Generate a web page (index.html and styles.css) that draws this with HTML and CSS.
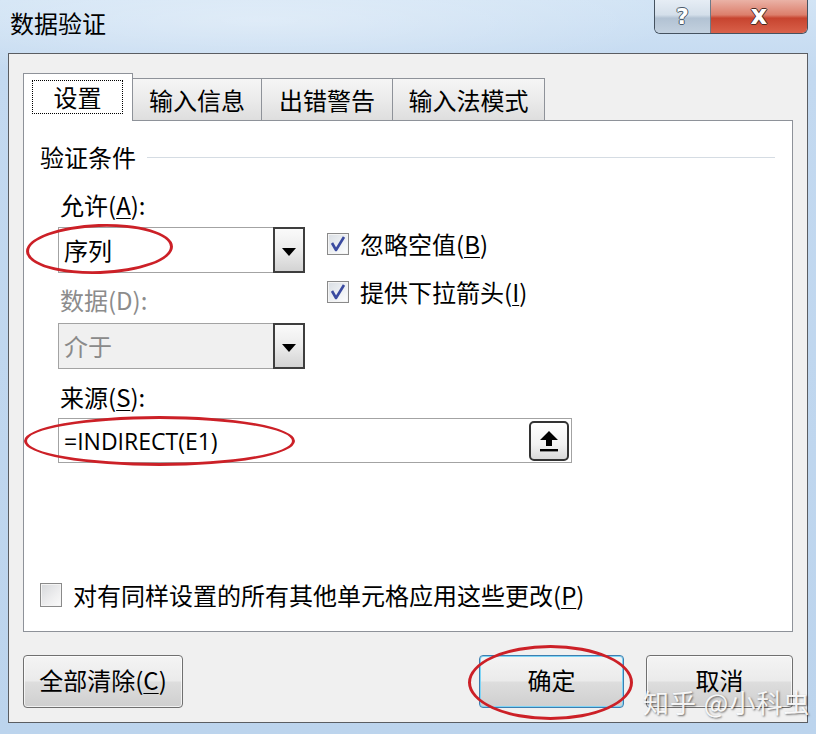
FILE: index.html
```html
<!DOCTYPE html>
<html>
	<head>
		<meta charset="UTF-8">
		<title>数据验证</title>
		<link rel="stylesheet" href="styles.css">
	</head>

	<body>
		<header class="titlebar">
			<h1 class="title">数据验证</h1>
			<div class="caption-btns">
				<span class="cap-help">?</span>
				<span class="cap-close">x</span>
			</div>
		</header>

		<div class="dialog">
			<nav class="tabs">
				<div class="tab active"><span class="focus">设置</span></div>
				<div class="tab w2">输入信息</div>
				<div class="tab w3">出错警告</div>
				<div class="tab w4">输入法模式</div>
			</nav>

			<section class="panel">
				<div class="group-head">
					<span>验证条件</span>
					<i class="rule"></i>
				</div>

				<div class="group">
					<div class="label first">允许(<u>A</u>):</div>
					<div class="allow-row">
						<div class="left">
							<div class="combo">
								<span class="combo-text">序列</span>
								<span class="drop"><i class="tri"></i></span>
							</div>
							<div class="label gray">数据(D):</div>
							<div class="combo disabled">
								<span class="combo-text">介于</span>
								<span class="drop"><i class="tri"></i></span>
							</div>
						</div>
						<div class="checks">
							<label class="check-row">
								<span class="box">
									<svg width="20" height="20" viewBox="0 0 20 20"><path d="M4 9 L8 16 L16 3" fill="none" stroke="#3a4aa0" stroke-width="2.6" stroke-linejoin="round"/></svg>
								</span>
								<span>忽略空值(<u>B</u>)</span>
							</label>
							<label class="check-row">
								<span class="box">
									<svg width="20" height="20" viewBox="0 0 20 20"><path d="M4 9 L8 16 L16 3" fill="none" stroke="#3a4aa0" stroke-width="2.6" stroke-linejoin="round"/></svg>
								</span>
								<span>提供下拉箭头(<u>I</u>)</span>
							</label>
						</div>
					</div>

					<div class="label src">来源(<u>S</u>):</div>
					<div class="source">
						<span class="formula">=INDIRECT(E1)</span>
						<span class="pick">
							<svg width="22" height="24" viewBox="0 0 22 24"><path d="M11 2 L20 11 L14 11 L14 17 L8 17 L8 11 L2 11 Z" fill="#000"/><rect x="2" y="20" width="18" height="2.4" fill="#000"/></svg>
						</span>
					</div>
				</div>

				<label class="check-row apply">
					<span class="box empty"></span>
					<span>对有同样设置的所有其他单元格应用这些更改(<u>P</u>)</span>
				</label>
			</section>

			<footer class="buttons">
				<button class="btn clear">全部清除(<u>C</u>)</button>
				<span class="spacer"></span>
				<button class="btn ok">确定</button>
				<button class="btn cancel">取消</button>
			</footer>
		</div>

		<!-- 红色圈注 -->
		<div class="mark m1"></div>
		<div class="mark m2"></div>
		<div class="mark m3"></div>

		<div class="watermark">知乎 @小科虫</div>
	</body>

</html>
```

FILE: styles.css
```css
/* Win7 风格的数据验证对话框 */
body {
	margin: 0;
	width: 816px;
	height: 734px;
	overflow: hidden;
	position: relative;
	font-family: "Noto Sans CJK SC", "Noto Sans", sans-serif;
	font-size: 24px;
	color: #000;
	background:
		radial-gradient(ellipse 420px 60px at 260px 20px, rgba(255, 255, 255, 0.35), rgba(255, 255, 255, 0)),
		linear-gradient(180deg, #d2e4f5 0%, #c3d9f0 10%, #bcd4ed 100%);
}

u {
	text-decoration-thickness: 1px;
	text-underline-offset: 3px;
}

.titlebar {
	height: 53px;
	display: flex;
	justify-content: space-between;
	align-items: flex-start;
}

.title {
	margin: 0;
	padding: 8px 0 0 10px;
	font-size: 24px;
	font-weight: normal;
	line-height: 30px;
}

.caption-btns {
	display: flex;
	margin-right: 8px;
	height: 33px;
	border: 1px solid #45525f;
	border-top: none;
	border-radius: 0 0 6px 6px;
	overflow: hidden;
}

.cap-help,
.cap-close {
	display: flex;
	justify-content: center;
	align-items: center;
	font-family: "DejaVu Sans", sans-serif;
	font-weight: bold;
	color: #fff;
}

.cap-help {
	width: 55px;
	font-size: 22px;
	border-right: 1px solid #6c7a88;
	background: linear-gradient(180deg, #e6edf5 0%, #d4dfea 45%, #b2c2d3 55%, #c3d1df 100%);
	text-shadow: -1px 0 #4b5a6a, 1px 0 #4b5a6a, 0 -1px #4b5a6a, 0 1px #4b5a6a;
}

.cap-close {
	width: 96px;
	font-size: 26px;
	background: linear-gradient(180deg, #eab2a6 0%, #dc7f6c 45%, #c7442f 55%, #d9614a 100%);
	text-shadow: -1px 0 #4a2a24, 1px 0 #4a2a24, 0 -1px #4a2a24, 0 1px #4a2a24;
	padding-bottom: 4px;
	box-sizing: border-box;
}

.dialog {
	margin: 0 8px;
	height: 670px;
	box-sizing: border-box;
	border: 1px solid #5a5d62;
	background-color: #f0f0f0;
	padding: 19px 14px 0;
}

.tabs {
	display: flex;
	align-items: flex-end;
	height: 47px;
}

.tab {
	height: 42px;
	box-sizing: border-box;
	border: 1px solid #8e9299;
	border-bottom: none;
	border-left: none;
	background: linear-gradient(180deg, #f5f5f5 0%, #ebebeb 50%, #dedede 100%);
	display: flex;
	justify-content: center;
	align-items: center;
	line-height: 30px;
}

.tab.active {
	width: 110px;
	height: 48px;
	margin-bottom: -1px;
	position: relative;
	z-index: 1;
	border-left: 1px solid #8e9299;
	background: #fff;
	padding: 6px 9px 7px 8px;
	align-items: stretch;
}

.focus {
	flex: 1;
	border: 1px dotted #000;
	display: flex;
	justify-content: center;
	align-items: center;
}

.w2 {
	width: 129px;
}

.w3 {
	width: 131px;
}

.w4 {
	width: 152px;
}

.panel {
	height: 512px;
	box-sizing: border-box;
	border: 1px solid #8e9299;
	background: #fff;
	padding: 21px 17px 21px 16px;
	display: flex;
	flex-direction: column;
}

.group-head {
	display: flex;
	align-items: center;
	line-height: 30px;
}

.rule {
	flex: 1;
	height: 1px;
	margin-left: 11px;
	background: #d5dce3;
}

.group {
	padding-left: 18px;
}

.label {
	line-height: 30px;
	padding-left: 2px;
	margin-top: 12px;
}

.label.first {
	margin-top: 18px;
}

.label.gray {
	color: #8c8c8c;
}

.label.src {
	margin-top: 13px;
}

.allow-row {
	display: flex;
	gap: 22px;
	margin-top: 7px;
}

.left {
	width: 247px;
}

.combo {
	height: 46px;
	box-sizing: border-box;
	border: 1px solid #a3a3a3;
	background: #fff;
	display: flex;
	align-items: center;
	justify-content: space-between;
}

.combo.disabled {
	margin-top: 8px;
	background: #f0f0f0;
	color: #8a8a8a;
}

.combo-text {
	padding-left: 5px;
	line-height: 30px;
}

.drop {
	width: 32px;
	height: 46px;
	margin: -1px -1px -1px 0;
	box-sizing: border-box;
	border: 2px solid #3e3e3e;
	background: linear-gradient(180deg, #fafafa 0%, #ececec 50%, #d3d3d3 100%);
	display: flex;
	justify-content: center;
	align-items: center;
}

.tri {
	width: 0;
	height: 0;
	border-left: 7px solid transparent;
	border-right: 7px solid transparent;
	border-top: 8px solid #000;
	margin-top: 3px;
}

.checks {
	display: flex;
	flex-direction: column;
	gap: 18px;
	padding-top: 2px;
}

.check-row {
	display: flex;
	align-items: center;
	gap: 11px;
	line-height: 30px;
}

.box {
	width: 22px;
	height: 22px;
	box-sizing: border-box;
	border: 1px solid #8a8a8a;
	background: linear-gradient(135deg, #d9dee4 0%, #f3f5f7 70%, #fff 100%);
	display: flex;
	justify-content: center;
	align-items: center;
	box-shadow: inset 0 0 0 1px #f4f4f4;
}

.box.empty {
	height: 24px;
	background: linear-gradient(135deg, #d6d8db 0%, #eeeeef 60%, #fafafa 100%);
}

.source {
	margin-top: 6px;
	width: 514px;
	height: 45px;
	box-sizing: border-box;
	border: 1px solid #a3a3a3;
	display: flex;
	align-items: center;
	justify-content: space-between;
	padding: 0 2px 0 5px;
}

.formula {
	font-family: "Open Sans", "Noto Sans", sans-serif;
	font-size: 23px;
	line-height: 30px;
}

.pick {
	width: 40px;
	height: 40px;
	box-sizing: border-box;
	border: 2px solid #333;
	border-radius: 5px;
	background: linear-gradient(180deg, #fff 0%, #f2f2f2 60%, #d9d9d9 100%);
	display: flex;
	justify-content: center;
	align-items: center;
}

.apply {
	margin-top: auto;
}

.buttons {
	display: flex;
	gap: 22px;
	margin-top: 23px;
}

.spacer {
	flex: 1;
}

.btn {
	height: 53px;
	border: 1px solid #707070;
	border-radius: 4px;
	background: linear-gradient(180deg, #f4f4f4 0%, #ebebeb 48%, #dddddd 52%, #cfcfcf 100%);
	font-family: "Noto Sans CJK SC", sans-serif;
	font-size: 24px;
	color: #000;
	padding: 0 0 4px;
	box-shadow: inset 0 0 0 1px rgba(255, 255, 255, 0.7);
}

.clear {
	width: 160px;
}

.ok {
	width: 145px;
	border-color: #3c7fb1;
	box-shadow: inset 0 0 0 1px #7fd4f5;
}

.cancel {
	width: 147px;
}

.mark {
	position: absolute;
	border: 3px solid #cc2027;
	border-radius: 50%;
	box-sizing: border-box;
}

.m1 {
	left: 26px;
	top: 224px;
	width: 147px;
	height: 50px;
	transform: rotate(-2deg);
}

.m2 {
	left: 24px;
	top: 416px;
	width: 271px;
	height: 50px;
}

.m3 {
	left: 468px;
	top: 645px;
	width: 165px;
	height: 75px;
}

.watermark {
	position: absolute;
	left: 643px;
	top: 686px;
	font-size: 26px;
	line-height: 32px;
	color: rgba(255, 255, 255, 0.92);
	text-shadow: 1px 1px 2px rgba(0, 0, 0, 0.55);
	letter-spacing: 1px;
}
```
